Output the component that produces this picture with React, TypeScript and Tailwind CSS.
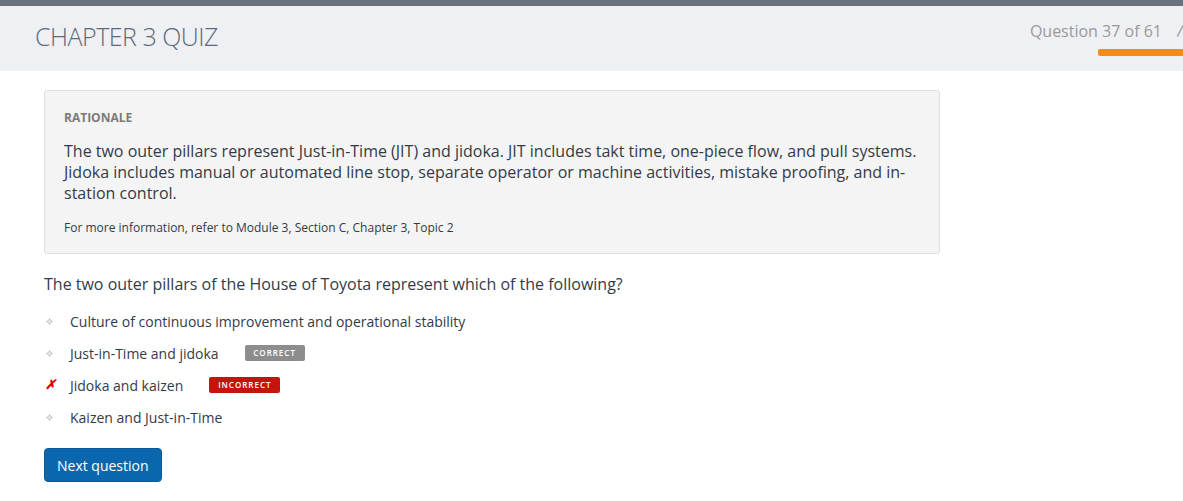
import React from "react";

const font = { fontFamily: '"Open Sans", "Noto Sans", sans-serif' };

function Bullet() {
  return (
    <span className="inline-flex w-[26px] items-center justify-start pl-[2px]">
      <svg width="7" height="7" viewBox="0 0 7 7">
        <path d="M3.5 0.5 L4.3 2.7 L6.5 3.5 L4.3 4.3 L3.5 6.5 L2.7 4.3 L0.5 3.5 L2.7 2.7 Z" fill="none" stroke="#b3b3b3" strokeWidth="0.9" />
      </svg>
    </span>
  );
}

export default function App() {
  const options = [
    { text: "Culture of continuous improvement and operational stability", kind: "none" },
    { text: "Just-in-Time and jidoka", kind: "correct" },
    { text: "Jidoka and kaizen", kind: "incorrect" },
    { text: "Kaizen and Just-in-Time", kind: "none" },
  ];
  return (
    <div className="w-[1183px] h-[501px] bg-white overflow-hidden" style={font}>
      <div className="h-[6px] bg-[#6a737c]" />
      <div className="h-[65px] bg-[#eff0f3] flex justify-between">
        <div className="pl-[35px] pt-[12px] text-[25px] font-light text-[#5b6b7c] tracking-[-0.5px]">
          CHAPTER 3 QUIZ
        </div>
        <div className="flex flex-col items-end pt-[13px]">
          <div className="flex items-center text-[16px] text-[#9a9a9a] pr-0">
            <span>Question 37 of 61</span>
            <span className="ml-[15px] w-[6px] italic overflow-hidden">/</span>
          </div>
          <div className="mt-[6px] w-[85px] h-[7px] bg-[#f28b1d] rounded-l-[2px]" />
        </div>
      </div>
      <div className="pl-[44px] pt-[19px]">
        <div className="w-[896px] bg-[#f4f4f4] border border-[#dedede] rounded-[3px] pl-[19px] pr-[20px] pt-[18px] pb-[17px]">
          <div className="text-[12px] font-bold text-[#7a7a7a] leading-[17px]">RATIONALE</div>
          <p className="mt-[15px] text-[16px] leading-[21px] text-[#333b47]">
            The two outer pillars represent Just-in-Time (JIT) and jidoka. JIT includes takt time, one-piece flow, and pull systems. Jidoka includes manual or automated line stop, separate operator or machine activities, mistake proofing, and in-station control.
          </p>
          <p className="mt-[15px] text-[12px] leading-[17px] text-[#333b47]">
            For more information, refer to Module 3, Section C, Chapter 3, Topic 2
          </p>
        </div>
        <div className="mt-[19px] text-[16px] leading-[22px] text-[#333b47]">
          The two outer pillars of the House of Toyota represent which of the following?
        </div>
        <div className="mt-[16px] flex flex-col gap-[12px]">
          {options.map((o) => (
            <div key={o.text} className="flex items-center h-[20px] text-[14px] text-[#333b47]">
              {o.kind === "incorrect" ? (
                <span className="inline-flex w-[26px] pl-[1px] text-[13px] font-bold italic text-[#e00000]">✗</span>
              ) : (
                <Bullet />
              )}
              <span>{o.text}</span>
              {o.kind === "correct" && (
                <span className="ml-[26px] inline-flex items-center justify-center h-[16px] w-[60px] rounded-[2px] bg-[#8d8d8d] text-white text-[8px] font-semibold tracking-[1px]">
                  CORRECT
                </span>
              )}
              {o.kind === "incorrect" && (
                <span className="ml-[26px] inline-flex items-center justify-center h-[16px] w-[71px] rounded-[2px] bg-[#c4150c] text-white text-[8px] font-semibold tracking-[1px]">
                  INCORRECT
                </span>
              )}
            </div>
          ))}
        </div>
        <button className="mt-[21px] h-[34px] px-[12px] rounded-[4px] bg-[#0b67ad] border border-[#085a98] text-white text-[14px]">
          Next question
        </button>
      </div>
    </div>
  );
}
